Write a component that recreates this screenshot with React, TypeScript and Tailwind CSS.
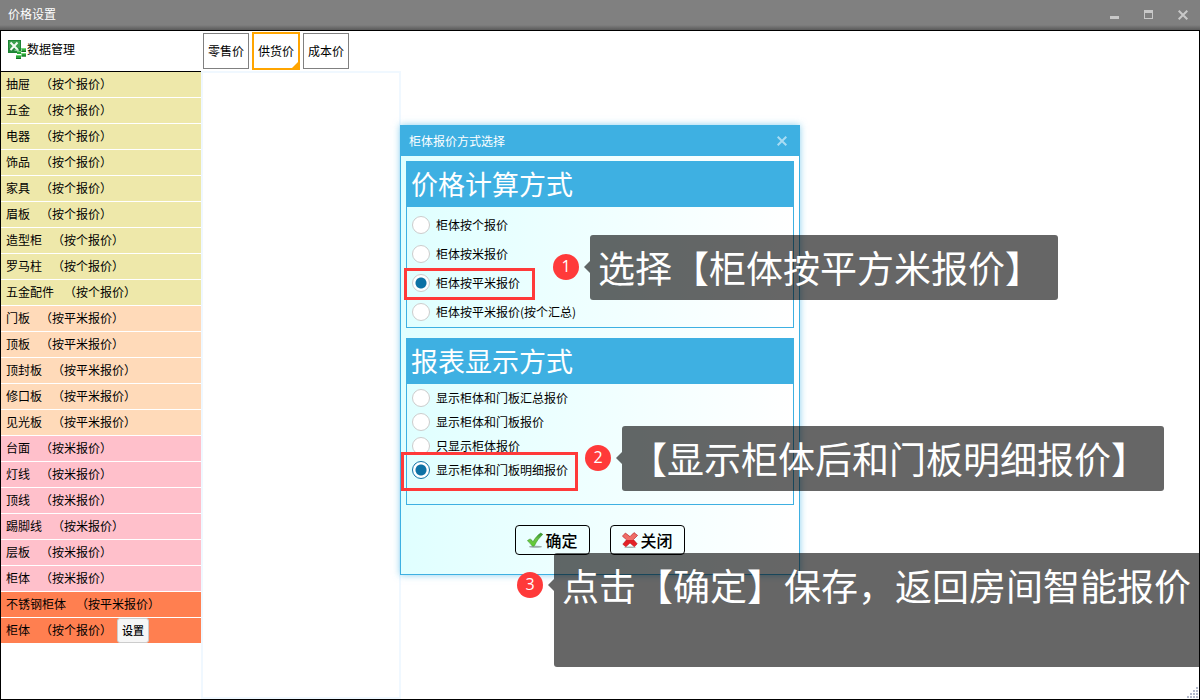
import type { ReactNode } from 'react'

type PriceRow = {
  name: string
  mode: string
  tone: string
  editable?: boolean
}

const KHAKI = 'bg-[#eee8aa]'
const PEACH = 'bg-[#ffdab9]'
const PINK = 'bg-[#ffc0cb]'
const CORAL = 'bg-[#ff7f50]'

const rows: PriceRow[] = [
  { name: '抽屉', mode: '按个报价', tone: KHAKI },
  { name: '五金', mode: '按个报价', tone: KHAKI },
  { name: '电器', mode: '按个报价', tone: KHAKI },
  { name: '饰品', mode: '按个报价', tone: KHAKI },
  { name: '家具', mode: '按个报价', tone: KHAKI },
  { name: '眉板', mode: '按个报价', tone: KHAKI },
  { name: '造型柜', mode: '按个报价', tone: KHAKI },
  { name: '罗马柱', mode: '按个报价', tone: KHAKI },
  { name: '五金配件', mode: '按个报价', tone: KHAKI },
  { name: '门板', mode: '按平米报价', tone: PEACH },
  { name: '顶板', mode: '按平米报价', tone: PEACH },
  { name: '顶封板', mode: '按平米报价', tone: PEACH },
  { name: '修口板', mode: '按平米报价', tone: PEACH },
  { name: '见光板', mode: '按平米报价', tone: PEACH },
  { name: '台面', mode: '按米报价', tone: PINK },
  { name: '灯线', mode: '按米报价', tone: PINK },
  { name: '顶线', mode: '按米报价', tone: PINK },
  { name: '踢脚线', mode: '按米报价', tone: PINK },
  { name: '层板', mode: '按米报价', tone: PINK },
  { name: '柜体', mode: '按米报价', tone: PINK },
  { name: '不锈钢柜体', mode: '按平米报价', tone: CORAL },
  { name: '柜体', mode: '按个报价', tone: CORAL, editable: true },
]

const tabs = ['零售价', '供货价', '成本价']
const activeTab = '供货价'

const calcOptions = ['柜体按个报价', '柜体按米报价', '柜体按平米报价', '柜体按平米报价(按个汇总)']
const reportOptions = ['显示柜体和门板汇总报价', '显示柜体和门板报价', '只显示柜体报价', '显示柜体和门板明细报价']

export default function App() {
  return (
    <div
      lang="zh-CN"
      className="relative flex min-h-screen flex-col overflow-hidden bg-white font-['Noto_Sans_CJK_SC',sans-serif] text-xs text-black"
    >
      <TitleBar />

      <div className="flex flex-1 border border-black">
        <Sidebar />
        <main className="flex min-w-0 flex-1 flex-col">
          <nav className="flex h-10 items-center gap-[3px] pl-0.5">
            {tabs.map((tab) => (
              <TabButton key={tab} label={tab} active={tab === activeTab} />
            ))}
          </nav>
          <div className="w-[200px] flex-1 border-2 border-[#f0f8ff]" />
        </main>
      </div>

      <div className="absolute inset-0 flex items-center justify-center">
        <div className="relative">
          <PricingDialog />

          <Highlight className="top-[143px] left-1 h-8 w-[131px]" />
          <Highlight className="top-[327px] left-px h-[39px] w-[177px]" />

          <Callout step={1} className="top-[110px] left-[153px]">
            选择【柜体按平方米报价】
          </Callout>
          <Callout step={2} className="top-[301px] left-[185px]">
            【显示柜体后和门板明细报价】
          </Callout>
          <Callout step={3} className="top-[428px] left-[117px]">
            点击【确定】保存，返回房间智能报价
            <br />
            &nbsp;
          </Callout>
        </div>
      </div>

      <ResizeGrip />
    </div>
  )
}

function TitleBar() {
  return (
    <header className="flex h-[30px] items-center justify-between bg-[linear-gradient(to_bottom,#808080_25px,#5a5a5a_30px)] pr-3 pl-2 text-white">
      <h1 className="pb-0.5 leading-4">价格设置</h1>
      <div className="flex gap-6 text-[#c8c8c8]">
        <button type="button" aria-label="最小化" className="size-2.5">
          <svg viewBox="0 0 10 10" className="size-2.5" fill="currentColor" shapeRendering="crispEdges">
            <path d="M0 6h9v3H0z" />
          </svg>
        </button>
        <button type="button" aria-label="最大化" className="size-2.5">
          <svg viewBox="0 0 10 10" className="size-2.5" fill="currentColor" shapeRendering="crispEdges">
            <path fillRule="evenodd" d="M0 0h9v9H0zM1 3v5h7V3z" />
          </svg>
        </button>
        <button type="button" aria-label="关闭窗口" className="size-2.5">
          <CloseMark />
        </button>
      </div>
    </header>
  )
}

function CloseMark() {
  return (
    <svg viewBox="0 0 10 10" className="size-2.5" fill="none" stroke="currentColor" strokeWidth="2">
      <path d="M.7.7l8.6 8.6M9.3.7L.7 9.3" />
    </svg>
  )
}

function Sidebar() {
  return (
    <aside className="w-[200px] shrink-0">
      <div className="flex h-[41px] items-center border-b border-black pb-1 pl-1.5">
        <ExcelIcon />
        <h2>数据管理</h2>
      </div>
      <ul>
        {rows.map((row, i) => (
          <li
            key={i}
            className={`flex h-[26px] items-start border-b border-white pl-[5px] leading-6 ${row.tone}`}
          >
            <span>{row.name}</span>
            <span className="ml-2.5">（{row.mode}）</span>
            {row.editable && (
              <button
                type="button"
                className="ml-[5px] h-[25px] w-8 rounded-[3px] border border-[#ccc] bg-[#f6f6f6] text-[11px] leading-[23px] font-medium"
              >
                设置
              </button>
            )}
          </li>
        ))}
      </ul>
    </aside>
  )
}

function TabButton({ label, active }: { label: string; active: boolean }) {
  if (active) {
    return (
      <button type="button" className="relative h-[38px] w-12 border-2 border-[#ffa500]">
        {label}
        <span className="absolute right-0 bottom-0 size-1.5 bg-[#ffa500] [clip-path:polygon(100%_0,100%_100%,0_100%)]" />
      </button>
    )
  }
  return (
    <button type="button" className="h-9 w-[46px] border border-[#808080]">
      {label}
    </button>
  )
}

function PricingDialog() {
  return (
    <form
      role="dialog"
      aria-labelledby="dialog-title"
      className="h-[450px] w-[400px] border border-[#3eb0e2] bg-linear-to-r from-[#e0ffff] to-white shadow-[0_0_7px_rgba(62,176,226,0.6)]"
    >
      <div className="flex h-[30px] items-center justify-between bg-[#3eb0e2] pr-3 pl-2">
        <h2 id="dialog-title" className="text-white">
          柜体报价方式选择
        </h2>
        <button type="button" aria-label="关闭对话框" className="size-2.5 text-[#a9dcf3]">
          <CloseMark />
        </button>
      </div>

      <div className="flex flex-col gap-2.5 p-[5px]">
        <OptionGroup
          title="价格计算方式"
          name="calc"
          options={calcOptions}
          selected="柜体按平米报价"
          bodyClass="pt-[3px] pb-px"
          rowClass="h-[29px]"
        />
        <OptionGroup
          title="报表显示方式"
          name="report"
          options={reportOptions}
          selected="显示柜体和门板明细报价"
          bodyClass="pt-0.5 pb-[22px]"
          rowClass="h-6"
          focused
        />
      </div>

      <div className="mt-[15px] flex justify-center gap-5">
        <DialogButton icon={<CheckIcon />}>确定</DialogButton>
        <DialogButton icon={<CrossIcon />}>关闭</DialogButton>
      </div>
    </form>
  )
}

type OptionGroupProps = {
  title: string
  name: string
  options: string[]
  selected: string
  bodyClass: string
  rowClass: string
  focused?: boolean
}

function OptionGroup({ title, name, options, selected, bodyClass, rowClass, focused }: OptionGroupProps) {
  return (
    <section className="border border-[#3eb0e2] bg-linear-to-r from-[#e0ffff] to-white">
      <h3 className="h-[45px] bg-[#3eb0e2] pl-1 text-[27px] leading-[43px] text-white">{title}</h3>
      <div className={bodyClass}>
        {options.map((option) => (
          <label key={option} className={`flex items-center gap-1.5 pl-[5px] ${rowClass}`}>
            <input
              type="radio"
              name={name}
              defaultChecked={option === selected}
              className={`size-[18px] appearance-none rounded-full border border-[#ccc] bg-white checked:bg-[radial-gradient(circle,#0c72a5_5px,white_6px)] ${
                focused ? 'checked:border-[#0c72a5]' : ''
              }`}
            />
            {option}
          </label>
        ))}
      </div>
    </section>
  )
}

function DialogButton({ icon, children }: { icon: ReactNode; children: ReactNode }) {
  return (
    <button
      type="button"
      className="flex h-[30px] w-[75px] items-center justify-center gap-0.5 rounded border border-black text-base leading-7 font-medium"
    >
      {icon}
      {children}
    </button>
  )
}

function Highlight({ className }: { className: string }) {
  return <div className={`absolute border-3 border-[#ff3a3a] ${className}`} />
}

function Callout({ step, className, children }: { step: number; className: string; children: ReactNode }) {
  return (
    <div className={`absolute flex items-start ${className}`}>
      <span className="mt-[19px] flex size-[26px] justify-center rounded-full bg-[#ff3a3a] font-['Open_Sans',sans-serif] text-base leading-6 text-white">
        {step}
      </span>
      <span className="mt-[26px] ml-[5px] h-3 w-1.5 bg-black/60 [clip-path:polygon(0_50%,100%_0,100%_100%)]" />
      <p className="rounded-[3px] bg-black/60 py-2 pr-4 pl-2 text-[37px] leading-[49px] whitespace-nowrap text-white">
        {children}
      </p>
    </div>
  )
}

function ExcelIcon() {
  return (
    <svg viewBox="0 0 20 20" className="size-5 shrink-0">
      <rect x="1" y="1" width="13" height="13" fill="#1c8434" />
      <rect x="2" y="2" width="11" height="11" fill="#3a9f4c" />
      <path d="M2 9h11v4H2z" fill="#23883a" />
      <path d="M3.500 3.500l7.500 7.500M10.500 3.500L3.500 11" stroke="#f2fbf3" strokeWidth="2" />
      <path d="M7.500 11.200h4.500" stroke="#b9dfbf" strokeWidth="1" />
      <path d="M14.500 9h4.500v4h-4.500zM10 12h4v3h-4zM14.500 14h4.500v3.500h-4.500zM9 16h5v4H9z" fill="#2aa53a" />
      <path d="M14.500 9h4.500v1.200h-4.500zM10 12h4v1h-4zM14.500 14h4.500v1h-4.500zM9 16h5v1H9z" fill="#72d873" />
      <path d="M14.500 12h4.500v1h-4.500zM14.500 16.500h4.500v1h-4.500zM9 19h5v1H9z" fill="#127024" />
    </svg>
  )
}

function CheckIcon() {
  return (
    <svg viewBox="0 0 16 16" className="size-4 shrink-0">
      <defs>
        <linearGradient id="check" x1="0" y1="0" x2="0" y2="1">
          <stop offset="0" stopColor="#2f8f2a" />
          <stop offset=".45" stopColor="#6cc247" />
          <stop offset="1" stopColor="#5fd02f" />
        </linearGradient>
      </defs>
      <ellipse cx="8.500" cy="14.800" rx="6.500" ry="1" fill="#4c5a56" opacity=".5" />
      <path
        d="M.4 8.800C1.200 7.600 2.600 7 3.600 7.200C4.600 7.600 5.400 8.800 6 9.800C8 6 10.800 2.800 13.800 1L15.800 2.400C12.400 5.400 9.600 9.200 7.600 13.600C6.800 14.400 5.800 14.400 5 13.800C3.800 12 2.200 10.200.4 8.800z"
        fill="url(#check)"
        stroke="#2f8a22"
        strokeWidth=".5"
      />
    </svg>
  )
}

function CrossIcon() {
  return (
    <svg viewBox="0 0 16 16" className="size-4 shrink-0">
      <defs>
        <linearGradient id="cross" x1="0" y1="0" x2="0" y2="1">
          <stop offset="0" stopColor="#ee6a64" />
          <stop offset=".5" stopColor="#f0706a" />
          <stop offset=".55" stopColor="#dd1f25" />
          <stop offset="1" stopColor="#ee2228" />
        </linearGradient>
      </defs>
      <ellipse cx="8" cy="15.200" rx="6" ry=".8" fill="#4c5a56" opacity=".45" />
      <path
        d="M3.400 1L8 4.600L12 .6L15.600 3.400L11.400 7.600L15.200 11.800L12.400 14.800L8 10.900L3.800 14.800L.8 12.200L4.600 7.800L.4 4.200z"
        fill="url(#cross)"
        stroke="#b3161d"
        strokeWidth=".6"
        strokeLinejoin="round"
      />
    </svg>
  )
}

function ResizeGrip() {
  return (
    <svg viewBox="0 0 12 12" className="absolute right-px bottom-px size-3" fill="#b4b9cb" shapeRendering="crispEdges">
      <path d="M9 0h2v2H9zM6 3h2v2H6zM9 3h2v2H9zM3 6h2v2H3zM6 6h2v2H6zM9 6h2v2H9zM0 9h2v2H0zM3 9h2v2H3zM6 9h2v2H6zM9 9h2v2H9z" />
    </svg>
  )
}
